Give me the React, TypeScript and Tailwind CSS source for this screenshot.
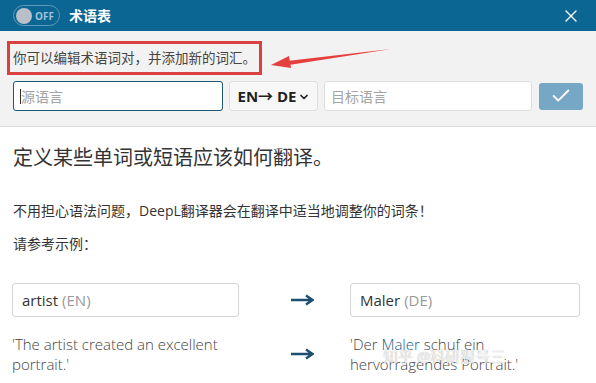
import { Check, X, ChevronDown } from 'lucide-react';

const cjk = { fontFamily: '"Open Sans", "Noto Sans CJK SC", sans-serif' };

const Arrow = () => (
  <svg width="24" height="12" viewBox="0 0 24 12" className="ml-[51px]">
    <path d="M1 6 H22 M16 1.5 L22.5 6 L16 10.5" fill="none" stroke="#1d4f70" strokeWidth="2.4" />
  </svg>
);

const App = () => {
  return (
    <div className="relative w-[596px] h-[383px] overflow-hidden bg-white text-[#333]" style={cjk}>
      {/* Header */}
      <header className="flex items-center h-[31px] bg-[#0b6694] px-[13px]">
        <div className="flex items-center w-[47px] h-[21px] rounded-full border border-[#5d9cbc] pl-[2px]">
          <span className="w-[16px] h-[16px] rounded-full bg-[#b9c0c8]" />
          <span className="ml-[3px] text-[10px] font-bold text-[#9cc3d8] leading-none">OFF</span>
        </div>
        <h1 className="ml-[9px] text-[14px] font-bold text-white leading-none">术语表</h1>
        <X className="ml-auto mr-[2px] text-white" size={20} strokeWidth={1.6} />
      </header>

      {/* Editor */}
      <section className="bg-[#f2f2f2] border-b border-[#dcdcdc] px-[13px] pt-[10px] pb-[15px]">
        <div className="relative">
          <div className="-ml-[6px] w-[255px] h-[34px] border-[3px] border-[#d9403f] flex items-center pl-[3px]">
            <p className="text-[13.5px] text-[#444] whitespace-nowrap">你可以编辑术语词对，并添加新的词汇。</p>
          </div>
          <svg className="absolute left-[256px] top-[6px]" width="124" height="22" viewBox="0 0 124 22">
            <path d="M122 2 L18 14 L20 18 Z" fill="#e6403e" />
            <path d="M2 18 L20 9 L22 21 Z" fill="#e6403e" />
          </svg>
        </div>
        <div className="flex items-center mt-[6px] gap-[6px]">
          <div className="flex items-center w-[210px] h-[30px] bg-white border border-[#1e5575] rounded-[3px] px-[6px]">
            <span className="w-px h-[15px] bg-[#333]" />
            <span className="text-[14px] text-[#a3a3a3]">源语言</span>
          </div>
          <div className="flex items-center justify-center w-[89px] h-[30px] bg-[#f7f7f7] border border-[#dedede] rounded-[3px]">
            <span className="text-[15px] font-bold text-[#222]">EN→ DE</span>
            <ChevronDown size={12} strokeWidth={3.5} className="ml-[1px] mt-[2px] text-[#222]" />
          </div>
          <div className="flex items-center w-[208px] h-[30px] bg-white border border-[#dedede] rounded-[3px] px-[6px]">
            <span className="text-[14px] text-[#a3a3a3]">目标语言</span>
          </div>
          <button className="ml-[1px] flex items-center justify-center w-[44px] h-[27px] bg-[#76a8c6] rounded-[3px]">
            <Check size={22} strokeWidth={2} className="text-white" />
          </button>
        </div>
      </section>

      {/* Description */}
      <main className="px-[13px]">
        <h2 className="mt-[19px] text-[20px] text-[#333] leading-[24px]">定义某些单词或短语应该如何翻译。</h2>
        <p className="mt-[31px] text-[14px] text-[#333] leading-[20px]">不用担心语法问题，DeepL翻译器会在翻译中适当地调整你的词条！</p>
        <p className="mt-[13px] text-[14px] text-[#333] leading-[20px]">请参考示例：</p>

        <div className="grid grid-cols-[227px_111px_230px] mt-[29px] items-center -ml-[1px]">
          <div className="h-[34px] flex items-center border border-[#d5d5d5] rounded-[3px] px-[9px] text-[15px]">
            <span className="text-[#333]">artist</span>
            <span className="ml-[4px] text-[#999]">(EN)</span>
          </div>
          <Arrow />
          <div className="h-[34px] flex items-center border border-[#d5d5d5] rounded-[3px] px-[9px] text-[15px]">
            <span className="text-[#333]">Maler</span>
            <span className="ml-[4px] text-[#999]">(DE)</span>
          </div>

          <p className="mt-[17px] text-[15px] font-light leading-[20px] text-[#444]">
            'The artist created an excellent portrait.'
          </p>
          <div className="mt-[17px]">
            <Arrow />
          </div>
          <p className="mt-[17px] text-[15px] font-light leading-[20px] text-[#444]">
            'Der <span className="text-[#1b5b84]">Maler</span> schuf ein hervorragendes Portrait.'
          </p>
        </div>
      </main>

      {/* Watermark */}
      <span className="absolute left-[383px] top-[345px] text-[15px] text-white/80 [text-shadow:0_0_1px_#999]">
        知乎 @科研狠号三
      </span>
    </div>
  );
};

export default App;
